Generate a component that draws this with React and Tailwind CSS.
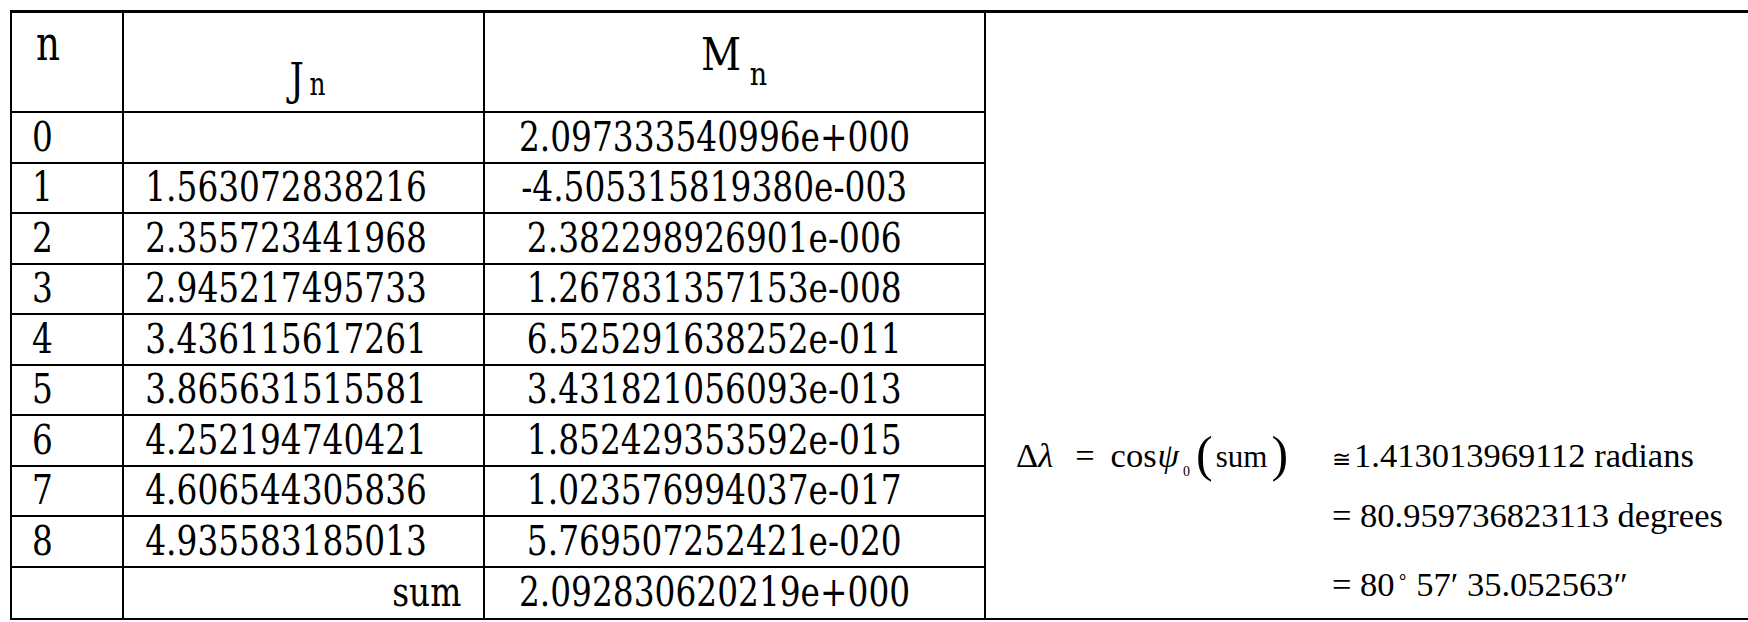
import React from 'react';

const rows = [
  ['0', '', '2.097333540996e+000'],
  ['1', '1.563072838216', '-4.505315819380e-003'],
  ['2', '2.355723441968', '2.382298926901e-006'],
  ['3', '2.945217495733', '1.267831357153e-008'],
  ['4', '3.436115617261', '6.525291638252e-011'],
  ['5', '3.865631515581', '3.431821056093e-013'],
  ['6', '4.252194740421', '1.852429353592e-015'],
  ['7', '4.606544305836', '1.023576994037e-017'],
  ['8', '4.935583185013', '5.769507252421e-020'],
  ['', 'sum', '2.092830620219e+000'],
];

const cell = 'border-r-2 border-black flex items-center whitespace-nowrap';

const App = () => {
  return (
    <div className="w-[1748px] h-[622px] bg-white text-black overflow-hidden pt-[10px] pl-[10px]">
      <div className="grid grid-cols-[112px_361px_501px_1fr] grid-rows-[100px_repeat(10,50.5px)] border-t-[3px] border-l-2 border-b-2 border-black font-['DejaVu_Serif',serif] leading-none">
        {/* Header */}
        <div className="border-r-2 border-b-2 border-black flex items-start pt-[6px] pl-[24px]">
          <span className="inline-block origin-left scale-x-[0.76] text-[49px]">n</span>
        </div>
        <div className="border-r-2 border-b-2 border-black flex items-start justify-center pt-[44px] pl-[9px] whitespace-nowrap">
          <span className="inline-block scale-x-[0.8] text-[45px]">
            J<span className="ml-[7px] text-[31px]">n</span>
          </span>
        </div>
        <div className="border-r-2 border-b-2 border-black flex items-start justify-center pt-[19px] whitespace-nowrap">
          <span className="inline-block scale-x-[0.87] text-[45px]">
            M<span className="ml-[10px] text-[31px] align-[-15px]">n</span>
          </span>
        </div>

        {/* Right panel with the result */}
        <div className="col-start-4 row-start-1 row-span-11 flex flex-col justify-end pb-[11px] font-['Liberation_Serif',serif] text-[34.5px] leading-[61px] whitespace-nowrap">
          <div className="h-[61px] pl-[30px]">
            <span className="inline-block w-[316px]">
              Δ<span className="italic">λ</span>
              <span className="ml-[22px] mr-[16px]">=</span>
              cos<span className="italic ml-[1px]">ψ</span>
              <span className="text-[14px] align-[-9px] ml-[4px]">0</span>
              <span className="text-[50px] align-[-4px] ml-[6px]">(</span>
              <span className="ml-[3px] text-[31px]">sum</span>
              <span className="text-[50px] align-[-4px] ml-[4px]">)</span>
            </span>
            <span className="text-[23px]">≅</span>
            <span className="ml-[3px]">1.413013969112 radians</span>
          </div>
          <div className="h-[61px] pl-[346px]">= 80.959736823113 degrees</div>
          <div className="h-[61px] pl-[346px]">
            = 80<span className="text-[18px] align-[14px] ml-[2px]">∘</span> 57′ 35.052563″
          </div>
        </div>

        {/* Rows */}
        {rows.map((r, i) => {
          const last = i === rows.length - 1;
          const bb = last ? '' : ' border-b-2';
          return (
            <React.Fragment key={i}>
              <div className={cell + bb + ' pl-[20px]'}>
                <span className="inline-block origin-left scale-x-[0.8] text-[41px]">{r[0]}</span>
              </div>
              <div className={cell + bb + (last ? ' justify-end pr-[22px]' : ' justify-center pr-[34px]')}>
                <span className={'inline-block scale-x-[0.8] text-[41px]' + (last ? ' origin-right' : '')}>{r[1]}</span>
              </div>
              <div className={cell + bb + ' justify-center pr-[40px]'}>
                <span className="inline-block scale-x-[0.8] text-[41px]">{r[2]}</span>
              </div>
            </React.Fragment>
          );
        })}
      </div>
    </div>
  );
};

export default App;
